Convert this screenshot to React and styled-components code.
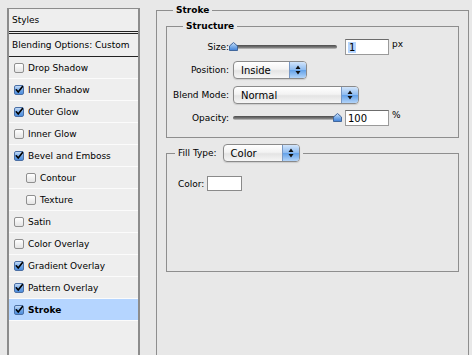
import React from "react";
import styled, { createGlobalStyle } from "styled-components";

const GlobalStyle = createGlobalStyle`
  html, body {
    margin: 0;
    padding: 0;
    background: #e8e8e8;
    font-family: "DejaVu Sans", "Liberation Sans", sans-serif;
    font-size: 9px;
    color: #000;
  }
`;

const effects = [
  { name: "Drop Shadow" },
  { name: "Inner Shadow", checked: true },
  { name: "Outer Glow", checked: true },
  { name: "Inner Glow" },
  { name: "Bevel and Emboss", checked: true },
  { name: "Contour", indent: true },
  { name: "Texture", indent: true },
  { name: "Satin" },
  { name: "Color Overlay" },
  { name: "Gradient Overlay", checked: true },
  { name: "Pattern Overlay", checked: true },
  { name: "Stroke", checked: true, selected: true },
];

function CheckMark() {
  return (
    <svg width="10" height="10" viewBox="0 0 10 10">
      <path d="M1.6 4.8 L4 7.6 L9.4 0.6" fill="none" stroke="#000" strokeWidth="2" strokeLinecap="round" />
    </svg>
  );
}

function Checkbox({ checked }) {
  return <Box $checked={checked}>{checked && <CheckMark />}</Box>;
}

function Arrows() {
  return (
    <svg width="6" height="10" viewBox="0 0 6 10">
      <path d="M3 0.5 L5.5 4 L0.5 4 Z M3 9.5 L5.5 6 L0.5 6 Z" fill="#111" />
    </svg>
  );
}

function Select({ value, width }) {
  return (
    <SelectBox $w={width}>
      <SelectText>{value}</SelectText>
      <SelectArrows>
        <Arrows />
      </SelectArrows>
    </SelectBox>
  );
}

function Thumb() {
  return (
    <svg width="9" height="9" viewBox="0 0 9 9">
      <defs>
        <linearGradient id="thumb" x1="0" y1="0" x2="0" y2="1">
          <stop offset="0" stopColor="#cfe3fb" />
          <stop offset="0.5" stopColor="#7fb0ea" />
          <stop offset="1" stopColor="#3f7fd6" />
        </linearGradient>
      </defs>
      <path d="M4.5 0.5 L8.5 4 L8.5 8.5 L0.5 8.5 L0.5 4 Z" fill="url(#thumb)" stroke="#41679c" strokeWidth="1" strokeLinejoin="round" />
    </svg>
  );
}

function Slider({ value }) {
  return (
    <SliderWrap>
      <Track />
      <ThumbSpot style={{ left: `${value * 100}%` }}>
        <Thumb />
      </ThumbSpot>
    </SliderWrap>
  );
}

export default function App() {
  return (
    <>
      <GlobalStyle />
      <Window>
        <StylesPanel>
          <PanelHeader>Styles</PanelHeader>
          <BlendingRow>Blending Options: Custom</BlendingRow>
          {effects.map((e) => (
            <EffectRow key={e.name} $indent={e.indent} $selected={e.selected}>
              <Checkbox checked={e.checked} />
              <span>{e.name}</span>
            </EffectRow>
          ))}
        </StylesPanel>

        <GroupBox>
          <Legend>Stroke</Legend>

          <SubGroup>
            <SubLegend>Structure</SubLegend>
            <Fields>
              <FieldRow>
                <Label>Size:</Label>
                <Slider value={0} />
                <NumberBox>
                  <Selected>1</Selected>
                </NumberBox>
                <Unit>px</Unit>
              </FieldRow>
              <FieldRow>
                <Label>Position:</Label>
                <Select value="Inside" width={74} />
              </FieldRow>
              <FieldRow $top={7}>
                <Label>Blend Mode:</Label>
                <Select value="Normal" width={126} />
              </FieldRow>
              <FieldRow>
                <Label>Opacity:</Label>
                <Slider value={1} />
                <NumberBox>100</NumberBox>
                <Unit>%</Unit>
              </FieldRow>
            </Fields>
          </SubGroup>

          <SubGroup $fill>
            <FillLegend>
              <span>Fill Type:</span>
              <Select value="Color" width={77} />
            </FillLegend>
            <ColorRow>
              <span>Color:</span>
              <Swatch />
            </ColorRow>
          </SubGroup>
        </GroupBox>
      </Window>
    </>
  );
}

const Window = styled.div`
  display: flex;
  align-items: flex-start;
  gap: 16px;
  padding: 0 0 0 7px;
  height: 355px;
  overflow: hidden;
`;

const StylesPanel = styled.div`
  margin-top: 8px;
  width: 133px;
  box-sizing: border-box;
  height: 360px;
  background: #eeeeee;
  border: 2px solid #8c8c8c;
  border-top-width: 1px;
  border-bottom: none;
  flex-shrink: 0;
`;

const PanelHeader = styled.div`
  height: 22px;
  display: flex;
  align-items: center;
  padding-left: 3px;
  border-bottom: 3px double #222;
`;

const BlendingRow = styled.div`
  height: 22px;
  display: flex;
  align-items: center;
  padding-left: 3px;
  border-bottom: 1px solid #222;
`;

const EffectRow = styled.div`
  height: 21px;
  display: flex;
  align-items: center;
  gap: 4px;
  padding-left: ${(p) => (p.$indent ? 17 : 5)}px;
  border-bottom: 1px solid #fbfbfb;
  background: ${(p) => (p.$selected ? "#b5d5ff" : "transparent")};
  font-weight: ${(p) => (p.$selected ? "bold" : "normal")};
`;

const Box = styled.span`
  width: 10px;
  height: 10px;
  box-sizing: border-box;
  border-radius: 2px;
  border: 1px solid ${(p) => (p.$checked ? "#4a6fa5" : "#8f8f8f")};
  background: ${(p) =>
    p.$checked
      ? "linear-gradient(#c4dcf8, #6fa5e6 55%, #4d8ddd)"
      : "linear-gradient(#ffffff, #e4e4e4)"};
  display: flex;
  align-items: center;
  justify-content: center;
  overflow: visible;
  flex-shrink: 0;
`;

const GroupBox = styled.fieldset`
  margin: 4px 0 0;
  padding: 0 9px;
  width: 313px;
  height: 360px;
  box-sizing: border-box;
  border: 1px solid #8e8e8e;
  border-bottom: none;
  flex-shrink: 0;
`;

const Legend = styled.legend`
  margin-left: 7px;
  padding: 0 3px;
  line-height: 13px;
  font-weight: bold;
`;

const SubGroup = styled.fieldset`
  margin: ${(p) => (p.$fill ? 6 : 3)}px 0 0;
  padding: 0;
  border: 1px solid #8e8e8e;
  min-height: ${(p) => (p.$fill ? 128 : 0)}px;
  box-sizing: border-box;
`;

const SubLegend = styled.legend`
  margin-left: 16px;
  padding: 0 3px;
  line-height: 13px;
  font-weight: bold;
`;

const FillLegend = styled.legend`
  margin-left: 8px;
  padding: 0 3px;
  display: flex;
  align-items: center;
  gap: 6px;
`;

const Fields = styled.div`
  display: flex;
  flex-direction: column;
  gap: 5px;
  padding: 5px 0 10px;
`;

const FieldRow = styled.div`
  display: flex;
  align-items: center;
  height: 18px;
  margin-top: ${(p) => (p.$top ? p.$top - 5 : 0)}px;
`;

const Label = styled.span`
  width: 62px;
  text-align: right;
  margin-right: 4px;
  flex-shrink: 0;
`;

const SliderWrap = styled.div`
  position: relative;
  width: 104px;
  height: 10px;
  margin-right: 8px;
  display: flex;
  align-items: center;
`;

const Track = styled.div`
  width: 100%;
  height: 4px;
  border-radius: 2px;
  background: linear-gradient(#4c4c4c, #7a7a7a 60%, #c8c8c8);
`;

const ThumbSpot = styled.span`
  position: absolute;
  top: 0;
  height: 9px;
  transform: translateX(-${(p) => 0}px);
  margin-left: -4px;
  & svg {
    display: block;
  }
`;

const NumberBox = styled.div`
  width: 44px;
  height: 16px;
  box-sizing: border-box;
  background: #fff;
  border: 1px solid #9a9a9a;
  border-top-color: #6c6c6c;
  padding-left: 2px;
  display: flex;
  align-items: center;
  font-size: 10px;
`;

const Selected = styled.span`
  background: #b5d5ff;
  padding: 0 1px;
`;

const Unit = styled.span`
  margin-left: 3px;
  align-self: flex-start;
  margin-top: 1px;
`;

const SelectBox = styled.div`
  width: ${(p) => p.$w}px;
  height: 18px;
  box-sizing: border-box;
  display: flex;
  align-items: stretch;
  border: 1px solid #8a8a8a;
  border-radius: 4px;
  overflow: hidden;
  background: linear-gradient(#ffffff, #f3f3f3 45%, #e4e4e4 55%, #f6f6f6);
  box-shadow: 0 1px 1px rgba(0, 0, 0, 0.12);
`;

const SelectText = styled.span`
  flex: 1;
  display: flex;
  align-items: center;
  padding-left: 7px;
  font-size: 10px;
`;

const SelectArrows = styled.span`
  width: 16px;
  border-left: 1px solid #7797c4;
  background: linear-gradient(#d2e5fb, #8fbcf0 48%, #64a2e9 52%, #b3d4f8);
  display: flex;
  align-items: center;
  justify-content: center;
`;

const ColorRow = styled.div`
  display: flex;
  align-items: center;
  gap: 3px;
  padding: 14px 0 0 11px;
`;

const Swatch = styled.span`
  width: 35px;
  height: 15px;
  box-sizing: border-box;
  background: #fff;
  border: 1px solid #8a8a8a;
`;
